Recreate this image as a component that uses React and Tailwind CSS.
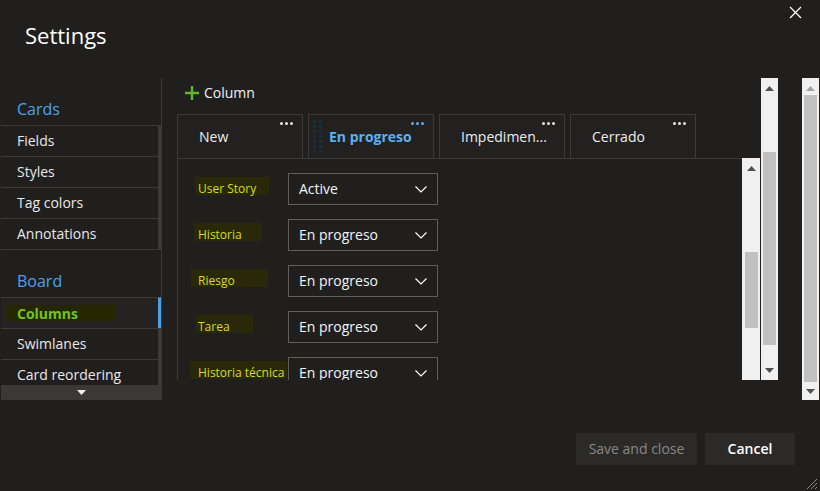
import React from 'react';

const navCards = ['Fields', 'Styles', 'Tag colors', 'Annotations'];
const navBoard = ['Columns', 'Swimlanes', 'Card reordering'];

const tabs = [
  { name: 'New' },
  { name: 'En progreso', active: true },
  { name: 'Impedimen...' },
  { name: 'Cerrado' },
];

const rows = [
  { label: 'User Story', value: 'Active', hl: 'ml-[-3px] w-[74px]' },
  { label: 'Historia', value: 'En progreso', hl: 'ml-[-4px] w-[68px]' },
  { label: 'Riesgo', value: 'En progreso', hl: 'ml-[-7px] w-[77px]' },
  { label: 'Tarea', value: 'En progreso', hl: 'ml-[-2px] w-[57px]' },
  { label: 'Historia técnica', value: 'En progreso', hl: 'ml-[-8px] w-[97px]' },
];

const Dots = ({ color }) => (
  <div className="flex gap-[2px]">
    <span className={`w-[3px] h-[3px] rounded-full ${color}`} />
    <span className={`w-[3px] h-[3px] rounded-full ${color}`} />
    <span className={`w-[3px] h-[3px] rounded-full ${color}`} />
  </div>
);

const Arrow = ({ up, color = '#505050' }) => (
  <svg width="9" height="5" viewBox="0 0 9 5">
    {up ? <path d="M0 5 L4.5 0 L9 5 Z" fill={color} /> : <path d="M0 0 L4.5 5 L9 0 Z" fill={color} />}
  </svg>
);

const Chevron = () => (
  <svg width="12" height="7" viewBox="0 0 12 7" fill="none" stroke="#fff" strokeWidth="1.2">
    <path d="M0.5 0.5 L6 6 L11.5 0.5" />
  </svg>
);

const DragHandle = () => (
  <div className="grid grid-cols-2 gap-x-[3px] gap-y-[2px] w-[9px]">
    {Array.from({ length: 14 }).map((_, i) => (
      <span key={i} className="w-[3px] h-[3px] rounded-[1px] bg-[#0b3349]" />
    ))}
  </div>
);

function NavItem({ label, selected }) {
  return (
    <div
      className={`h-[31px] ml-[1px] pb-[2px] flex items-center border-t border-[#3b3a39] border-r-[3px] ${
        selected ? 'border-r-[#4aa0e6] bg-[#242322]' : 'border-r-[#3b3a39]'
      }`}
    >
      {selected ? (
        <span className="ml-[4px] mt-[2px] w-[111px] h-[16px] bg-[#262600] flex items-center pl-[12px] font-bold text-[#70c41c]">
          {label}
        </span>
      ) : (
        <span className="pl-[16px] text-[#e8e8e8]">{label}</span>
      )}
    </div>
  );
}

export default function App() {
  return (
    <div
      className="w-[820px] h-[491px] bg-[#201f1e] flex flex-col overflow-hidden text-[14px] text-white"
      style={{ fontFamily: '"Segoe UI", "Open Sans", "Noto Sans", sans-serif' }}
    >
      {/* header */}
      <div className="h-[78px] relative shrink-0">
        <h1 className="pl-[25px] pt-[20px] text-[22px] leading-[30px] text-white font-normal">Settings</h1>
        <button className="absolute top-[6px] right-[18px] w-[13px] h-[13px]">
          <svg width="13" height="13" viewBox="0 0 13 13" stroke="#fff" strokeWidth="1.3">
            <path d="M1 1 L12 12 M12 1 L1 12" />
          </svg>
        </button>
      </div>

      {/* main */}
      <div className="h-[322px] flex shrink-0">
        {/* nav */}
        <div className="w-[162px] border-r border-[#3b3a39] flex flex-col shrink-0">
          <div className="flex-1 overflow-hidden">
            <div className="h-[47px] flex items-end pb-[5px] pl-[17px] text-[16px] leading-[22px] text-[#4aa3ef]">Cards</div>
            {navCards.map((l) => (
              <NavItem key={l} label={l} />
            ))}
            <div className="h-[48px] ml-[1px] border-t border-[#3b3a39] flex items-end pb-[5px] pl-[16px] text-[16px] leading-[22px] text-[#4aa3ef]">
              Board
            </div>
            {navBoard.map((l) => (
              <NavItem key={l} label={l} selected={l === 'Columns'} />
            ))}
          </div>
          <div className="h-[15px] ml-[1px] bg-[#3a3938] flex items-center justify-center">
            <Arrow color="#f0f0f0" />
          </div>
        </div>

        {/* right area */}
        <div className="w-[598px] pl-[15px] flex flex-col shrink-0">
          <div className="h-[36px] flex items-center pl-[8px] pb-[6px] gap-[5px]">
            <svg width="14" height="14" viewBox="0 0 14 14" stroke="#5fb832" strokeWidth="2.4">
              <path d="M7 0 V14 M0 7 H14" />
            </svg>
            <span className="text-[#f0f0f0] pb-[2px]">Column</span>
          </div>

          <div className="h-[44px] flex gap-[5px]">
            {tabs.map((t) => (
              <div
                key={t.name}
                className="w-[126px] h-[44px] border-t border-x border-[#3b3a39] bg-[#222120] relative flex items-center"
              >
                {t.active ? (
                  <div className="flex items-center pl-[4px] gap-[7px]">
                    <DragHandle />
                    <span className="font-bold text-[#5cb0f2]">{t.name}</span>
                  </div>
                ) : (
                  <span className="pl-[21px] text-[#ececec]">{t.name}</span>
                )}
                <div className="absolute top-[7px] right-[9px]">
                  <Dots color={t.active ? 'bg-[#5cb0f2]' : 'bg-[#e8e8e8]'} />
                </div>
              </div>
            ))}
          </div>

          <div className="h-[222px] flex">
            <div className="w-[565px] border-l border-t border-[#3b3a39] overflow-hidden pt-[14px]">
              <div className="flex flex-col gap-[14px] pl-[20px]">
                {rows.map((r) => (
                  <div key={r.label} className="flex items-center h-[32px]">
                    <div className="w-[90px] relative h-[32px] flex items-center">
                      <span className={`absolute top-[4px] h-[18px] bg-[#29290a] ${r.hl}`} />
                      <span className="relative text-[12px] text-[#dcdc10]">{r.label}</span>
                    </div>
                    <div className="w-[150px] h-[32px] border border-[#5f5e5c] flex items-center justify-between pl-[10px] pr-[10px]">
                      <span className="text-[#f4f4f4] pb-[1px]">{r.value}</span>
                      <Chevron />
                    </div>
                  </div>
                ))}
              </div>
            </div>
            {/* inner scrollbar */}
            <div className="w-[18px] bg-[#f0f0f0] flex flex-col items-center pt-[8px]">
              <Arrow up />
              <div className="mt-[81px] w-[13px] h-[76px] bg-[#c1c1c1]" />
            </div>
          </div>
        </div>

        {/* outer scrollbar B */}
        <div className="ml-[1px] w-[17px] h-[302px] bg-[#f0f0f0] flex flex-col items-center pt-[8px] shrink-0">
          <Arrow up />
          <div className="mt-[61px] w-[13px] h-[193px] bg-[#c1c1c1]" />
          <div className="mt-[23px]">
            <Arrow />
          </div>
        </div>

        {/* dialog scrollbar C */}
        <div className="ml-[24px] w-[17px] h-[322px] bg-[#f0f0f0] flex flex-col items-center pt-[8px] shrink-0">
          <Arrow up color="#a3a3a3" />
          <div className="mt-[4px] w-[13px] h-[287px] bg-[#c1c1c1]" />
          <div className="mt-[7px]">
            <Arrow />
          </div>
        </div>
      </div>

      {/* footer */}
      <div className="flex-1 flex justify-end items-start pt-[33px] pr-[25px] gap-[8px] relative">
        <button className="w-[121px] h-[32px] pb-[2px] bg-[#2b2a29] text-[#8a8886]">Save and close</button>
        <button className="w-[90px] h-[32px] pb-[2px] bg-[#2b2a29] text-white font-semibold">Cancel</button>
        <svg className="absolute right-[2px] bottom-[1px]" width="12" height="12" viewBox="0 0 12 12" stroke="#8a8886" strokeWidth="1">
          <path d="M11 1 L1 11 M11 5 L5 11 M11 9 L9 11" />
        </svg>
      </div>
    </div>
  );
}
